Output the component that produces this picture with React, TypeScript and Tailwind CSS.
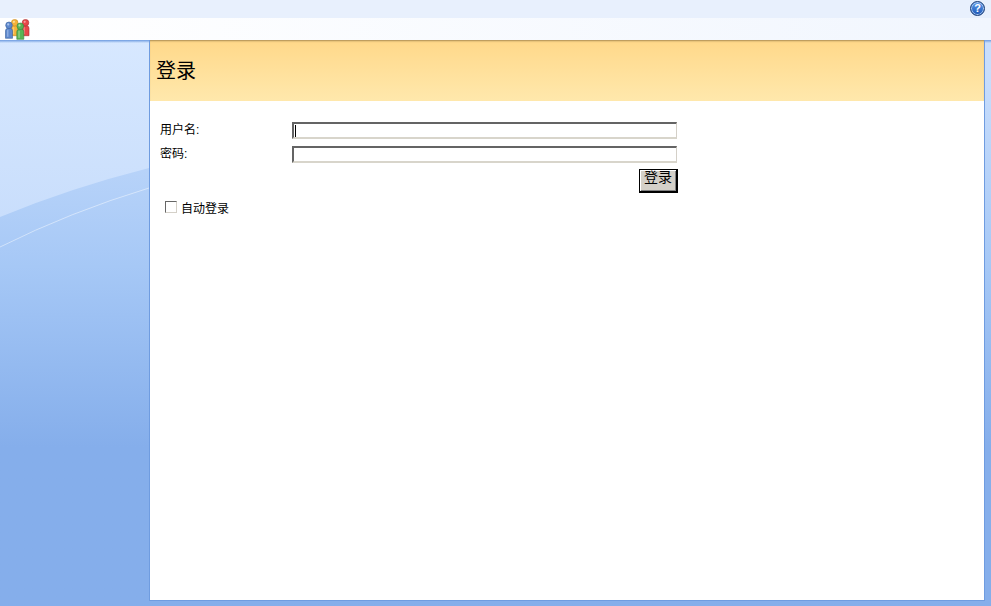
import React from "react";

function PeopleLogo() {
  const people = [
    { x: 16.5, y: 0.2, c: "#e8474a", d: "#a82c30", h: "#f59a9a" },
    { x: 5.7, y: 0.2, c: "#f4b23a", d: "#c98a1c", h: "#fbdc94" },
    { x: 11.3, y: 3.8, c: "#58b455", d: "#34853a", h: "#b0e0a4" },
    { x: 0, y: 2.8, c: "#5f88cc", d: "#38609c", h: "#aac4ec" },
  ];
  return (
    <svg width="26" height="21" viewBox="0 0 26 21">
      {people.map((p, i) => (
        <g key={i} transform={`translate(${p.x} ${p.y})`}>
          <path d="M0.5 9 Q0.5 6.5 3 6.5 L5 6.5 Q7.5 6.5 7.5 9 L7.5 16.5 L0.5 16.5 Z" fill={p.c} stroke={p.d} strokeWidth="0.6" />
          <rect x="2" y="8" width="1.5" height="7" fill={p.h} fillOpacity="0.6" />
          <circle cx="4" cy="3.5" r="3.3" fill={p.c} stroke={p.d} strokeWidth="0.6" />
          <circle cx="3.2" cy="2.6" r="1.1" fill={p.h} />
        </g>
      ))}
    </svg>
  );
}

function HelpIcon() {
  return (
    <div className="flex h-[15px] w-[15px] items-center justify-center rounded-full border border-[#173a73] bg-gradient-to-b from-[#5d9bec] to-[#1c55b4] font-['Liberation_Sans',sans-serif] text-[11px] font-bold leading-none text-white shadow-[inset_0_0_0_1px_#a9c8f2]">
      ?
    </div>
  );
}

function Field({ label, caret }: { label: string; caret?: boolean }) {
  return (
    <div className="flex h-[17px] items-center">
      <label className="w-[142px] pb-[2px] pl-[10px]">{label}</label>
      <div className="relative h-[17px] w-[385px] border-b-2 border-l-2 border-r border-t-2 border-b-[#d8d5cb] border-l-[#646464] border-r-[#d4d0c8] border-t-[#646464] bg-white">
        {caret && <div className="absolute left-px top-px h-[12px] w-px bg-black" />}
      </div>
    </div>
  );
}

export default function App() {
  return (
    <div className="flex h-[606px] w-[991px] flex-col overflow-hidden bg-white font-['Liberation_Sans','Noto_Sans_CJK_SC',sans-serif] text-[12px] text-black">
      <div className="flex h-[18px] shrink-0 items-start justify-end bg-[#e8f0fd] pr-[6px] pt-px">
        <HelpIcon />
      </div>
      <div className="flex h-[22px] shrink-0 items-center bg-gradient-to-r from-white to-[#f1f6fe] pl-[5px]">
        <PeopleLogo />
      </div>
      <div className="relative flex-1 bg-gradient-to-b from-[#c9defc] from-[5%] via-[#a6c8f6] via-[40%] to-[#85aeeb] to-[72%] pb-[5px] pl-[149px] pr-[6px]">
        <svg className="absolute left-0 top-0" width="149" height="566" viewBox="0 0 149 566">
          <defs>
            <linearGradient id="swoosh" x1="0" y1="0" x2="0" y2="1">
              <stop offset="0" stopColor="#d7e8ff" />
              <stop offset="1" stopColor="#c9defc" />
            </linearGradient>
          </defs>
          <path d="M0 177 Q70 148 149 128 L149 0 L0 0 Z" fill="url(#swoosh)" />
          <path d="M0 207 Q70 172 149 148" fill="none" stroke="#ffffff" strokeOpacity="0.45" strokeWidth="1" />
        </svg>
        <div className="absolute inset-x-0 top-0 h-[3px] bg-gradient-to-b from-[#6d9be0] to-transparent" />
        <div className="relative flex h-full flex-col border-b border-l border-r border-[#6f9ce0] bg-white">
          <div className="flex h-[61px] items-center bg-gradient-to-b from-[#ffd98b] from-[5%] to-[#ffe8ac] pl-[6px] text-[20px] shadow-[inset_0_2px_2px_-1px_#a88a50]">
            登录
          </div>
          <div className="flex w-[528px] flex-col pt-[21px]">
            <div className="flex flex-col gap-[7px]">
              <Field label="用户名:" caret />
              <Field label="密码:" />
            </div>
            <div className="mt-[6px] flex justify-end">
              <button className="flex h-[24px] w-[39px] items-start justify-center border border-b-2 border-r-2 border-black bg-[#d4d0c8] text-[14px] leading-[15px] shadow-[inset_1px_1px_0_#ffffff,inset_-1px_-1px_0_#808080]">
                登录
              </button>
            </div>
            <div className="mt-[8px] flex h-[14px] items-center pl-[15px]">
              <div className="mb-[2px] h-[12px] w-[12px] border border-b-[#d4d0c8] border-l-[#666666] border-r-[#d4d0c8] border-t-[#666666] bg-white" />
              <span className="ml-[4px] mt-[2px]">自动登录</span>
            </div>
          </div>
        </div>
      </div>
    </div>
  );
}
